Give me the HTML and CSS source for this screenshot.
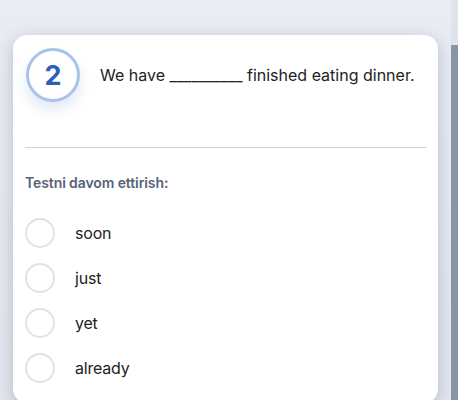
FILE: index.html
```html
<!DOCTYPE html>
<html>
<head>
<meta charset="utf-8">
<link rel="stylesheet" href="styles.css">
</head>
<body>
<div class="page">
  <div class="card">
    <div class="question">
      <div class="num">2</div>
      <p class="qtext">We have __________ finished eating dinner.</p>
    </div>
    <hr class="divider">
    <div class="label">Testni davom ettirish:</div>
    <ul class="options">
      <li class="option"><span class="radio"></span><span class="otext">soon</span></li>
      <li class="option"><span class="radio"></span><span class="otext">just</span></li>
      <li class="option"><span class="radio"></span><span class="otext">yet</span></li>
      <li class="option"><span class="radio"></span><span class="otext">already</span></li>
    </ul>
  </div>
</div>
<div class="scrollbar"><div class="thumb"></div></div>
</body>
</html>
```

FILE: styles.css
```css
* { box-sizing: border-box; }
html, body { margin: 0; padding: 0; height: 400px; overflow: hidden; }
body {
  background: linear-gradient(180deg, #e9ecf3 0%, #e2e6ee 100%);
  font-family: Inter, "Noto Sans", sans-serif;
  width: 458px;
}
.page {
  width: 451px;
  padding: 35px 13px 0 13px;
}
.card {
  background: #fff;
  border-radius: 14px;
  height: 368px;
  padding: 13px 12px 0 12px;
  box-shadow: 0 4px 16px rgba(60, 72, 100, 0.28);
}
.question {
  display: flex;
  align-items: center;
  gap: 20px;
  height: 54px;
  padding-left: 1px;
}
.num {
  width: 54px;
  height: 54px;
  flex: none;
  border-radius: 50%;
  border: 3px solid #a8c2ea;
  display: flex;
  align-items: center;
  justify-content: center;
  color: #2b5fba;
  font-weight: 700;
  font-size: 27px;
  background: #fff;
  box-shadow: 0 8px 14px rgba(120, 150, 220, 0.22);
}
.qtext {
  margin: 0;
  font-size: 16px;
  color: #222;
  letter-spacing: 0;
}
.divider {
  border: 0;
  border-top: 1px solid #c4d2e2;
  margin: 45px 0 0 0;
}
.label {
  margin-top: 26px;
  font-size: 14px;
  font-weight: 600;
  color: #586276;
  letter-spacing: -0.1px;
  line-height: 17px;
}
.options {
  list-style: none;
  margin: 27px 0 0 0;
  padding: 0;
  display: flex;
  flex-direction: column;
  gap: 15px;
}
.option {
  display: flex;
  align-items: center;
  gap: 20px;
  height: 30px;
}
.radio {
  width: 30px;
  height: 30px;
  flex: none;
  border-radius: 50%;
  border: 2px solid #e2e2e2;
}
.otext {
  font-size: 16px;
  color: #222;
  letter-spacing: -0.2px;
}
.scrollbar {
  position: fixed;
  top: 0;
  right: 0;
  width: 7px;
  height: 400px;
  background: #dfe3ea;
}
.thumb {
  position: absolute;
  top: 45px;
  left: 0;
  width: 7px;
  height: 355px;
  background: #8b94a6;
}
```
